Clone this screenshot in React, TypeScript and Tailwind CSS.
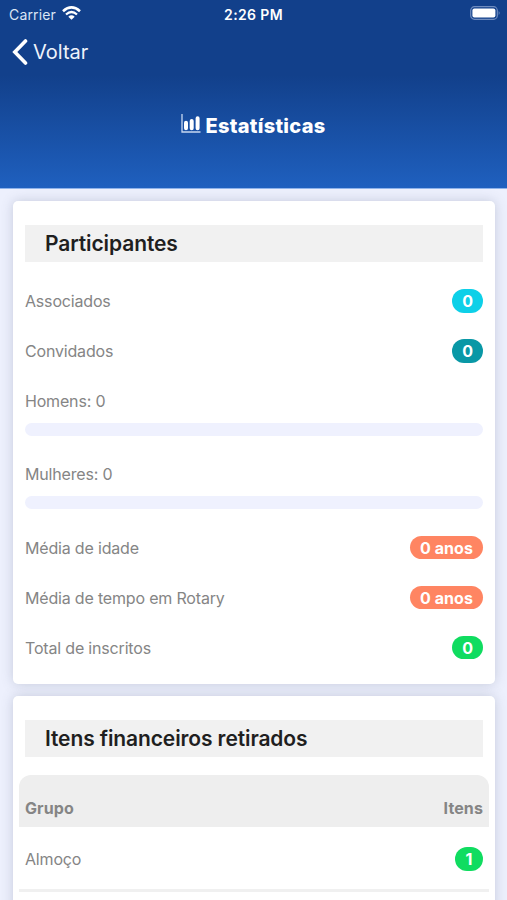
import type { ReactNode } from "react";

interface BadgeProps {
  color: string;
  children: ReactNode;
}

function Badge({ color, children }: BadgeProps) {
  return (
    <span
      className={`${color} flex h-[23.5px] min-w-7 items-center justify-center rounded-full px-[10px] text-[16px] font-bold tracking-[0.05px] text-white`}
    >
      {children}
    </span>
  );
}

function Row({ label, children }: { label: string; children: ReactNode }) {
  return (
    <div className="flex h-[50px] items-center justify-between">
      <span>{label}</span>
      {children}
    </div>
  );
}

function ProgressRow({ label, value }: { label: string; value: number }) {
  return (
    <div className="h-[73.3px] pt-[13px]">
      <div className="leading-6">
        {label}: {value}
      </div>
      <div className="mt-[10px] h-[12.5px] overflow-hidden rounded-full bg-[#eff1fe]">
        <div className="h-full bg-[#1f60bd]" style={{ width: `${value}%` }} />
      </div>
    </div>
  );
}

function CardTitle({ children }: { children: ReactNode }) {
  return (
    <h2 className="flex h-[37px] items-center bg-[#f1f1f1] pt-px pl-5 text-[21px] font-semibold tracking-[-0.11px] text-[#1f1f1f]">
      {children}
    </h2>
  );
}

function StatusBar() {
  return (
    <div className="flex h-7 items-center px-[9px] text-[14px]">
      <div className="flex flex-1 items-center gap-[6px]">
        <span className="tracking-[0.15px] text-[#dbe5f5]">Carrier</span>
        <svg className="-mt-[2px] h-[14px] w-[19px]" viewBox="0 0 19 14">
          <path d="M1 5.200 Q9.500 -2.300 18 5.200" fill="none" stroke="#fff" strokeWidth="2.600" />
          <path d="M4 8.500 Q9.500 3.600 15 8.500" fill="none" stroke="#fff" strokeWidth="2.300" />
          <path d="M6.300 10.700 Q9.500 8 12.700 10.700 L9.500 13.800 Z" fill="#fff" />
        </svg>
      </div>
      <span className="font-semibold tracking-[0.35px]">2:26 PM</span>
      <div className="flex flex-1 justify-end">
        <svg className="-mt-[2px] -mr-[3px] h-[14px] w-[31px]" viewBox="0 0 31 14">
          <rect x="0.700" y="0.700" width="26.600" height="12.600" rx="3.800" fill="none" stroke="#6f8cbf" strokeWidth="1.200" />
          <rect x="2.400" y="2.500" width="23" height="9" rx="2" fill="#fff" />
          <path d="M28.700 5 Q30.600 7 28.700 9 Z" fill="#6f8cbf" />
        </svg>
      </div>
    </div>
  );
}

export default function App() {
  return (
    <div className="h-[900px] w-full overflow-hidden bg-[#edf0fd] font-['Inter','Liberation_Sans',sans-serif] text-[16px] tracking-[-0.18px] text-[#858585]">
      {/* Header */}
      <header className="h-[189px] border-b border-[#8fb3ea] bg-linear-to-b from-[#12408b] from-40% to-[#1f60bf] text-white">
        <StatusBar />
        <button className="flex h-12 items-center pl-3 text-[20px] tracking-normal text-[#eef3fb]">
          <svg className="h-[26px] w-4" viewBox="0 0 16 26">
            <path d="M13.500 2 L2.800 13 L13.500 24" fill="none" stroke="#fff" strokeWidth="3.600" strokeLinecap="round" />
          </svg>
          <span className="ml-[5px]">Voltar</span>
        </button>
        <div className="mt-[36px] flex h-7 items-center justify-center gap-1">
          <svg className="mb-[5px] h-[19px] w-5" viewBox="0 0 20 19">
            <path d="M1 0 V18 H19.500" fill="none" stroke="#c7d7f1" strokeWidth="1.300" />
            <path d="M5 8.800 V14.200 M10.700 7 V14.200 M16.600 4.200 V14.200" stroke="#fff" strokeWidth="4" strokeLinecap="round" />
          </svg>
          <h1 className="text-[20px] font-extrabold tracking-[0.3px]">Estatísticas</h1>
        </div>
      </header>

      <main className="flex flex-col gap-3 pt-3 pr-3 pl-[13px]">
        <section className="h-[483px] rounded-[5px] bg-white px-3 pt-6 shadow-[0_0_12px_rgba(80,90,120,0.25)]">
          <CardTitle>Participantes</CardTitle>
          <div className="pt-[14px]">
            <Row label="Associados">
              <Badge color="bg-[#0dd0e8]">0</Badge>
            </Row>
            <Row label="Convidados">
              <Badge color="bg-[#0998a6]">0</Badge>
            </Row>
            <ProgressRow label="Homens" value={0} />
            <ProgressRow label="Mulheres" value={0} />
            <Row label="Média de idade">
              <Badge color="bg-[#ff8562]">0 anos</Badge>
            </Row>
            <Row label="Média de tempo em Rotary">
              <Badge color="bg-[#ff8562]">0 anos</Badge>
            </Row>
            <Row label="Total de inscritos">
              <Badge color="bg-[#10dc60]">0</Badge>
            </Row>
          </div>
        </section>

        <section className="h-[300px] rounded-[5px] bg-white px-3 pt-6 shadow-[0_0_12px_rgba(80,90,120,0.25)]">
          <CardTitle>Itens financeiros retirados</CardTitle>
          <div className="-mx-[6px] mt-[18px]">
            <div className="flex h-[52px] items-center justify-between rounded-t-xl bg-[#eeeeee] px-[6px] pt-[13px] font-bold tracking-[0.1px]">
              <span>Grupo</span>
              <span>Itens</span>
            </div>
            <div className="h-[65px] border-b-[3px] border-[#f0f0f0] px-[6px] pt-[7px]">
              <Row label="Almoço">
                <Badge color="bg-[#10dc60]">1</Badge>
              </Row>
            </div>
          </div>
        </section>
      </main>
    </div>
  );
}
